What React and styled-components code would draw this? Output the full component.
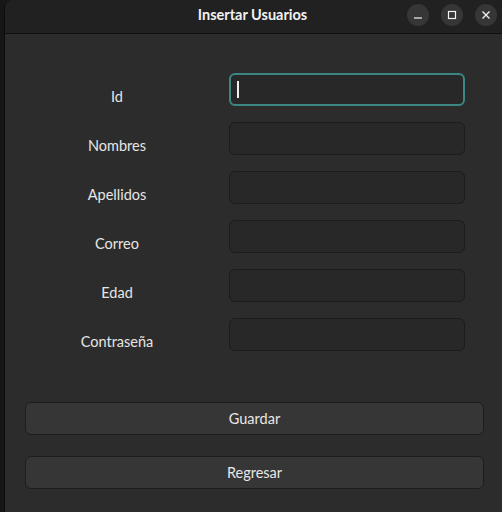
import React from "react";
import styled, { createGlobalStyle } from "styled-components";

const Global = createGlobalStyle`
  html, body { margin: 0; padding: 0; background: #181818; }
  body { width: 502px; height: 512px; overflow: hidden; font-family: "Lato", "Noto Sans", sans-serif; }
  * { box-sizing: border-box; }
`;

const Screen = styled.div`
  display: flex;
  width: 502px;
  height: 512px;
  background: #181818;
`;

const Desktop = styled.div`
  width: 4px;
  flex: none;
  background: #161616;
`;

const Window = styled.div`
  flex: 1;
  display: flex;
  flex-direction: column;
  background: #2c2c2c;
  border-left: 1px solid #0c0c0c;
  border-top-left-radius: 9px;
  overflow: hidden;
`;

const TitleBar = styled.div`
  height: 34px;
  flex: none;
  display: grid;
  grid-template-columns: 1fr auto 1fr;
  align-items: center;
  background: #212121;
  border-bottom: 1px solid #0f0f0f;
  padding: 0 5px 0 0;
`;

const Title = styled.div`
  grid-column: 2;
  color: #f2f2f2;
  font-weight: 700;
  font-size: 14.5px;
  margin-left: 3px;
  margin-top: -4px;
`;

const Controls = styled.div`
  grid-column: 3;
  justify-self: end;
  display: flex;
  gap: 12px;
  margin-top: -3px;
`;

const CtrlButton = styled.div`
  width: 22px;
  height: 22px;
  border-radius: 50%;
  background: #363636;
  display: flex;
  align-items: center;
  justify-content: center;
`;

const Body = styled.div`
  flex: 1;
  display: flex;
  flex-direction: column;
  padding: 39px 18px 0 20px;
`;

const Form = styled.div`
  display: flex;
  flex-direction: column;
  gap: 16px;
`;

const Row = styled.div`
  display: flex;
  align-items: flex-start;
  gap: 20px;
  height: 33px;
`;

const Label = styled.label`
  width: 184px;
  height: 33px;
  text-align: center;
  color: #e6e6e6;
  font-size: 14.5px;
  line-height: 19px;
  padding-top: 14px;
`;

const Field = styled.div`
  position: relative;
  width: 236px;
  height: 33px;
`;

const Input = styled.input`
  width: 100%;
  height: 100%;
  background: #282828;
  border: ${(p) => (p.$focused ? "2px solid #3c8784" : "1px solid #1c1c1c")};
  border-radius: 6px;
  outline: none;
  color: #eee;
  font: inherit;
  caret-color: transparent;
`;

const Caret = styled.span`
  position: absolute;
  left: 8px;
  top: 8px;
  width: 1.5px;
  height: 17px;
  background: #f0f0f0;
`;

const Actions = styled.div`
  display: flex;
  flex-direction: column;
  gap: 21px;
  margin-top: 51px;
`;

const Button = styled.button`
  height: 33px;
  width: 459px;
  background: #363636;
  border: 1px solid #1d1d1d;
  border-radius: 6px;
  color: #e8e8e8;
  font-family: inherit;
  font-size: 14.5px;
  padding: 0;
`;

const fields = [
  { label: "Id", focused: true },
  { label: "Nombres" },
  { label: "Apellidos" },
  { label: "Correo" },
  { label: "Edad" },
  { label: "Contraseña" },
];

export default function App() {
  return (
    <Screen>
      <Global />
      <Desktop />
      <Window>
        <TitleBar>
          <Title>Insertar Usuarios</Title>
          <Controls>
            <CtrlButton>
              <svg width="10" height="10" viewBox="0 0 10 10">
                <line x1="1" y1="8" x2="9" y2="8" stroke="#f2f2f2" strokeWidth="1.2" />
              </svg>
            </CtrlButton>
            <CtrlButton>
              <svg width="10" height="10" viewBox="0 0 10 10">
                <rect x="1.5" y="1.5" width="7" height="7" fill="none" stroke="#f2f2f2" strokeWidth="1.2" />
              </svg>
            </CtrlButton>
            <CtrlButton>
              <svg width="10" height="10" viewBox="0 0 10 10">
                <path d="M1.5 1.5 L8.5 8.5 M8.5 1.5 L1.5 8.5" stroke="#f2f2f2" strokeWidth="1.3" />
              </svg>
            </CtrlButton>
          </Controls>
        </TitleBar>
        <Body>
          <Form>
            {fields.map((f) => (
              <Row key={f.label}>
                <Label>{f.label}</Label>
                <Field>
                  <Input $focused={f.focused} type={f.label === "Contraseña" ? "password" : "text"} />
                  {f.focused && <Caret />}
                </Field>
              </Row>
            ))}
          </Form>
          <Actions>
            <Button>Guardar</Button>
            <Button>Regresar</Button>
          </Actions>
        </Body>
      </Window>
    </Screen>
  );
}
